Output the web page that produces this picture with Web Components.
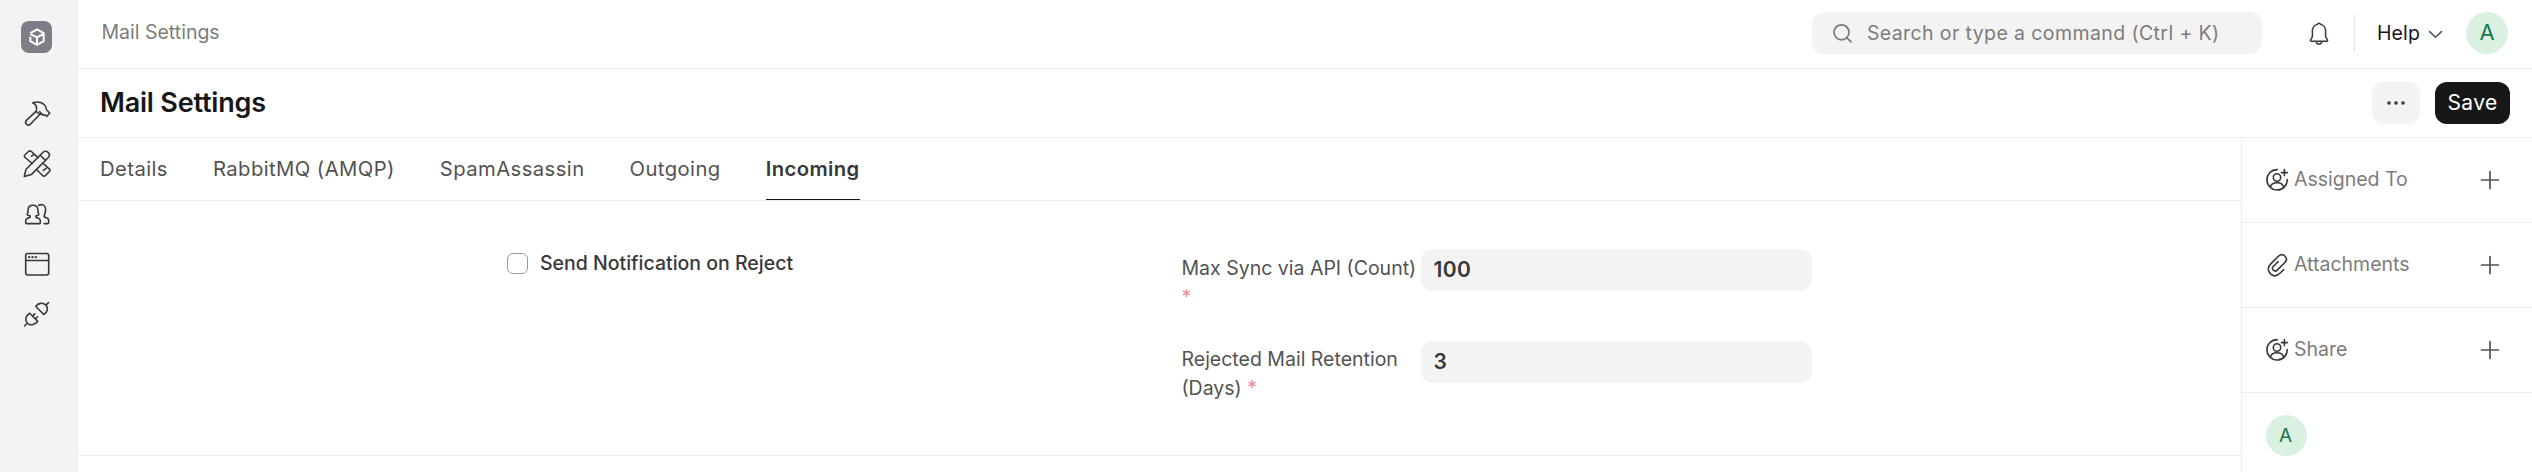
<!DOCTYPE html>
<html lang="en">
<head>
<meta charset="utf-8">
<title>Mail Settings</title>
<style>
  html, body { margin: 0; height: 100%; overflow: hidden; background: #fff; }
  body { font: 400 19.5px/29px Inter, "Liberation Sans", sans-serif; color: #383838; }
</style>
</head>
<body>
<desk-app></desk-app>
<script>
const ICONS = {
  hammer: [30, 30, '<path d="M9.8 3.7C14 2.4 18.8 3.2 21.6 6c1.800 1.800 1.200 4 2.400 5.300l2.700 2.700-3 3.500-2-1.800-1.700.4-3.300-3.400M9.800 3.700c3 1.500 4.500 4.300 3.500 8.600M13 12.300L3.400 21.400c-2.400 2.600 1.300 6.300 3.900 3.900L16.700 15.500M13 12.300l4 3.200 1.400-.9"/>'],
  design: [30, 30, '<path d="M1.300 27.500l1.600-7L19.800 3.500c1.500-1.700 3.700-1.700 5.300-.2s1.500 3.800 0 5.400L8.300 25.600zM17.200 6.200l5.300 5.300M9.300 14.500l-7.200-6c-1-.9-1-1.800 0-2.800l3.300-3.200c1-.9 2-.9 3 0l6.900 6.300M8.600 7.200l2.600-2M19.800 14l6.400 5.800c1 1 1 2 0 3l-3.600 3.700c-1 1-2 1-3 0l-6.200-6M20.300 21.300l2.800-2"/>'],
  users: [30, 30, '<path d="M10 6.200c-3 0-4.800 2-4.900 4.600-.1 1.700-.2 3.200-.9 5 .4 1 2 .9 2.900.9v1.500l-2.900 1.200c-1.200.6-1.500 1.200-1.500 2.300v2c0 .6.300.9.900.9h12.800c.6 0 .9-.3.900-.9v-2c0-1.100-.3-1.700-1.500-2.300l-2.900-1.200v-1.500c.9 0 2.500.1 2.900-.9-.7-1.800-.8-3.300-.9-5-.1-2.600-1.900-4.600-4.900-4.600zM15.800 6.300c3.300-1.700 6.800 0 6.800 4 0 2.500-.4 4.300-1.400 6.500v1l2.700 1.200c1.300.6 1.800 1.400 1.800 2.600v1.800c0 .8-.3 1.200-1.100 1.200h-3.400"/>'],
  web: [30, 30, '<rect x="2.700" y="4.500" width="23" height="21.500" rx="2.200"/><path d="M2.700 11.500h23"/><g fill="currentColor" stroke="none"><circle cx="6.200" cy="8.100" r="1.200"/><circle cx="9.500" cy="8.100" r="1.200"/><circle cx="12.800" cy="8.100" r="1.200"/></g>'],
  plug: [30, 30, '<path d="M1.500 27l2.700-2.700M6.700 14.300l8 8c-2.300 3.500-7 4.600-10.200 2-3-3-2-7.500 2.200-10zM9.500 17.200l2.300-2.300M12.300 20l2.300-2.300M12.800 7.500l8 8c3.800-2.200 4.800-6.600 2.200-9.400-3.200-2.900-8-2.200-10.200 1.400zM23 6.100l2.500-2.500"/>'],
  search: [21, 21, '<circle cx="9.500" cy="9.300" r="7.500"/><path d="M15 14.800l4 4"/>'],
  bell: [24, 26, '<path d="M12 3.300c-.9 0-1.300.4-1.600 1.100-3.200.9-5 3.500-5 6.700v4.900c0 1.500-.4 2-1.500 3.300-.8 1-.7 1.900.5 1.900h15.200c1.200 0 1.300-.9.500-1.900-1.100-1.300-1.500-1.800-1.500-3.300v-4.900c0-3.200-1.800-5.800-5-6.700-.3-.7-.7-1.100-1.600-1.100zM9.300 21.400c0 3.600 5.400 3.600 5.400 0"/>'],
  chevron: [15, 9, '<path d="M1.600 1.600l5.900 5.700 5.900-5.700"/>'],
  dots: [20, 6, '<g fill="currentColor" stroke="none"><circle cx="3" cy="3" r="1.800"/><circle cx="10" cy="3" r="1.800"/><circle cx="17" cy="3" r="1.800"/></g>'],
  assign: [24, 24, '<path d="M12.300 1.600A10.200 10.200 0 1 0 22.300 11.500M5.300 19.300c.6-3 3.200-4.600 6.700-4.600s6.100 1.600 6.700 4.600"/><circle cx="12" cy="9.500" r="3.700"/><path d="M19.400 1.600v6M16.400 4.600h6"/>'],
  clip: [24, 24, '<path d="M18.700 16.600l-3.200 3.200c-3.500 3.600-7 3.600-9.700 1.300-3.500-3.200-3.300-7 .2-10.500l7.400-7.300c2.200-2.100 4.600-2 6.500-.3 2 2 2 4.400 0 6.500l-7.700 7.600c-1.300 1.300-2.700 1.200-3.900.1-1.200-1.200-1.100-2.600.1-3.900l4.800-4.700"/>'],
  plus: [20, 20, '<path d="M10 1.500v17M1.500 10h17"/>'],
  cube: [20, 20, '<path stroke-linecap="butt" d="M3.300 7.200L10 10.400l6.700-3.600M10 10.400v7.800M3.300 6.200L10 2.300l6.700 3.900v7.900L10 17.900l-6.700-3.800V9.700"/>']
};

const define = (name, css, html) => customElements.define(name, class extends HTMLElement {
  constructor() {
    super();
    const template = document.createElement('template');
    template.innerHTML = `<style>:host{box-sizing:border-box}${css}</style>${typeof html === 'function' ? html(this) : html}`;
    this.attachShadow({ mode: 'open' }).append(template.content.cloneNode(true));
  }
});

define('ui-icon', ':host{display:block;flex:none}svg{display:block}', el => {
  const [w, h, body] = ICONS[el.getAttribute('name')];
  return `<svg width="${w}" height="${h}" viewBox="0 0 ${w} ${h}" fill="none" stroke="currentColor" stroke-width="${el.getAttribute('weight') || 1.5}" stroke-linecap="round" stroke-linejoin="round">${body}</svg>`;
});

define('user-avatar', `
  :host{display:flex;align-items:center;justify-content:center;flex:none;width:42px;height:42px;border-radius:50%;background:#daf0e1;color:#16794c;font-size:22px;padding-bottom:1px}
  :host([small]){width:41px;height:41px;font-size:19px;padding:0 2px 0 0}`, '<slot></slot>');

define('desk-rail', `
  :host{display:flex;flex-direction:column;align-items:center;width:78px;flex:none;background:#f3f3f3;border-right:1px solid #ededed;padding:21px 4px 0 0}
  .logo{width:31px;height:32px;border-radius:8px;background:#7c7f88;color:#fff;display:grid;place-items:center;margin-bottom:46px}
  nav{display:flex;flex-direction:column;gap:20px;margin-left:3px}`,
  `<div class="logo"><ui-icon name="cube" weight="2"></ui-icon></div>
   <nav><ui-icon name="hammer" weight="1.600"></ui-icon><ui-icon name="design" weight="1.600"></ui-icon><ui-icon name="users" weight="1.600"></ui-icon><ui-icon name="web" weight="1.600"></ui-icon><ui-icon name="plug" weight="1.600"></ui-icon></nav>`);

define('search-bar', `
  :host{display:flex;align-items:center;width:450px;height:42px;border-radius:12px;background:#f3f3f3;color:#7c7c7c;padding:0 0 0 20px;gap:14px;letter-spacing:.4px}`,
  '<ui-icon name="search" weight="1.800"></ui-icon><span><slot></slot></span>');

define('top-bar', `
  :host{display:flex;align-items:center;height:69px;border-bottom:1px solid #ededed;padding:0 24px 2px 23.500px}
  .crumb{flex:1;color:#7c7c7c;padding-bottom:1px}
  .bell{margin:0 23px 0 45px;color:#383838}
  .rule{width:1px;height:36px;background:#e2e2e2}
  .help{display:flex;align-items:center;color:#171717;font-weight:430;letter-spacing:.15px;gap:8px;margin:0 23px 0 22px}
  .help ui-icon{color:#525252;padding-top:2px}`,
  `<span class="crumb">Mail Settings</span>
   <search-bar>Search or type a command (Ctrl + K)</search-bar>
   <ui-icon class="bell" name="bell"></ui-icon><div class="rule"></div>
   <div class="help"><span>Help</span><ui-icon name="chevron"></ui-icon></div>
   <user-avatar>A</user-avatar>`);

define('ui-button', `
  :host{display:flex;align-items:center;justify-content:center;height:42px;width:48px;border-radius:12px;background:#f3f3f3;color:#383838}
  :host([primary]){width:75px;background:#171717;color:#fff;font-size:21px;font-weight:420;letter-spacing:.4px;padding-bottom:1px}`, '<slot></slot>');

define('title-bar', `
  :host{display:flex;align-items:center;height:69px;border-bottom:1px solid #ededed;padding:0 22px 0 22px;gap:15px}
  h1{flex:1;margin:0;font-size:27px;font-weight:600;line-height:36px;letter-spacing:-.2px;color:#171717}`,
  `<h1>Mail Settings</h1><ui-button><ui-icon name="dots"></ui-icon></ui-button><ui-button primary>Save</ui-button>`);

define('tab-item', `
  :host{display:flex;align-items:center;height:62px;color:#525252;border-bottom:1px solid transparent}
  :host([active]){color:#383838;font-weight:600;border-bottom-color:#171717}`, '<slot></slot>');

define('tab-list', `
  :host{display:flex;gap:45px;height:63px;padding-left:22px;border-bottom:1px solid #ededed;font-size:20.250px;letter-spacing:.42px}`, '<slot></slot>');

define('check-field', `
  :host{display:flex;align-items:center;gap:12px;height:29px;font-weight:500;color:#383838}
  i{box-sizing:border-box;width:21px;height:21px;border:1px solid #999;border-radius:6px}`, '<i></i><span><slot></slot></span>');

define('number-field', `
  :host{display:flex;align-items:flex-start;height:92px}
  label{box-sizing:border-box;width:240px;padding:5px 0 0 .5px;color:#525252}
  :host(:last-child) label{padding-top:4px}
  b{font-weight:400;color:#f08a8a}
  output{box-sizing:border-box;width:391px;height:42px;border-radius:12px;background:#f3f3f3;color:#383838;font-size:21px;font-weight:600;letter-spacing:.4px;line-height:42px;padding-left:12.500px}`,
  el => `<label><slot></slot> <b>*</b></label><output>${el.getAttribute('value')}</output>`);

define('settings-form', `
  :host{display:grid;grid-template-columns:429px 674px 1fr;height:255px;border-bottom:1px solid #ededed}
  check-field{grid-column:2;margin-top:48px}
  .col{padding-top:48px}`,
  `<check-field>Send Notification on Reject</check-field>
   <div class="col"><number-field value="100">Max Sync via API (Count)</number-field><number-field value="3">Rejected Mail Retention (Days)</number-field></div>`);

define('side-row', `
  :host{display:flex;align-items:center;height:85px;border-bottom:1px solid #ededed;padding:0 32px 0 23px;color:#7c7c7c}
  ui-icon{color:#383838}
  span{flex:1;padding:0 0 2px 5px}
  .add{color:#525252}`,
  el => `<ui-icon name="${el.getAttribute('icon')}" weight="1.600"></ui-icon><span><slot></slot></span><ui-icon class="add" name="plus" weight="1.700"></ui-icon>`);

define('side-panel', `
  :host{display:block;width:291px;flex:none;border-left:1px solid #ededed}
  user-avatar{margin:22px 0 0 24px}`,
  `<side-row icon="assign">Assigned To</side-row><side-row icon="clip">Attachments</side-row><side-row icon="assign">Share</side-row><user-avatar small>A</user-avatar>`);

define('desk-app', `
  :host{display:flex;height:472px;width:100%}
  main{flex:1;min-width:0}
  .body{display:flex;height:334px}
  .page{flex:1}`,
  `<desk-rail></desk-rail>
   <main><top-bar></top-bar><title-bar></title-bar>
     <div class="body"><div class="page">
       <tab-list><tab-item>Details</tab-item><tab-item>RabbitMQ (AMQP)</tab-item><tab-item>SpamAssassin</tab-item><tab-item>Outgoing</tab-item><tab-item active>Incoming</tab-item></tab-list>
       <settings-form></settings-form>
     </div><side-panel></side-panel></div>
   </main>`);
</script>
</body>
</html>
